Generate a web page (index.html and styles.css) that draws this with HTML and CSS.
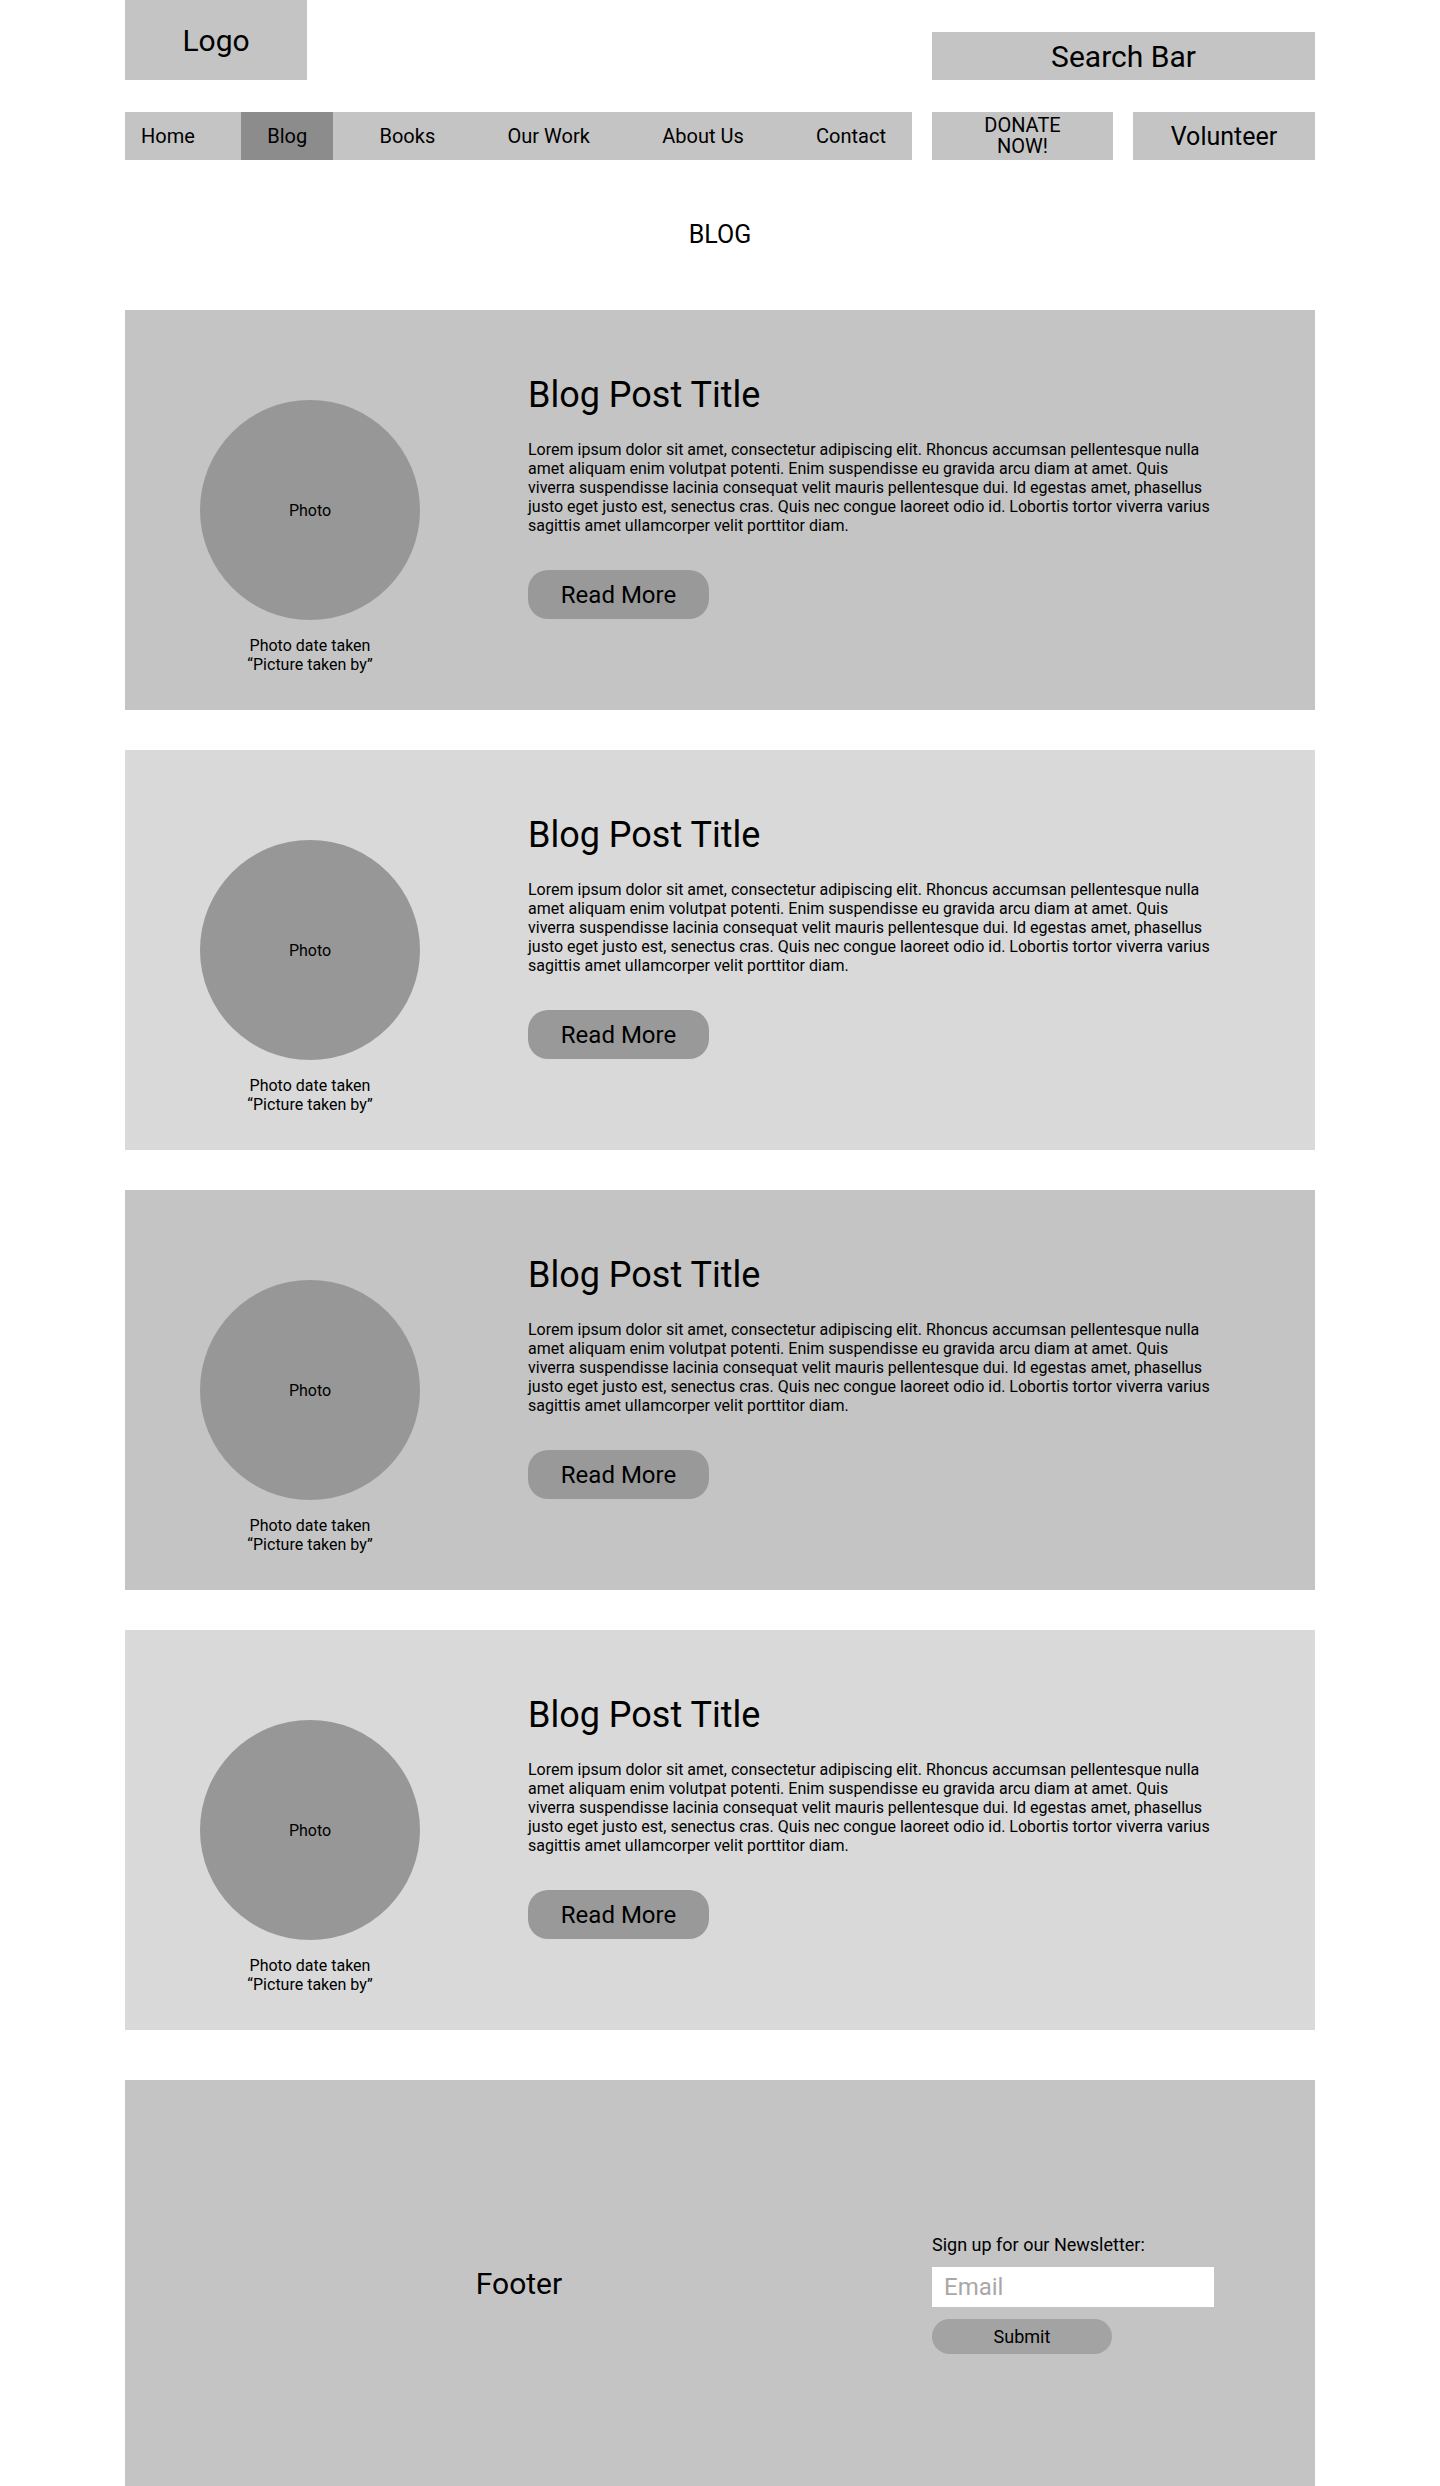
FILE: index.html
```html
<!DOCTYPE html>
<html lang="en">
<head>
<meta charset="utf-8">
<title>Blog</title>
<link rel="stylesheet" href="styles.css">
</head>
<body>
<div class="page">
  <header class="site-header">
    <div class="top-row">
      <div class="logo">Logo</div>
      <div class="search">Search Bar</div>
    </div>
    <div class="nav-row">
      <nav class="nav">
        <a class="nav-item">Home</a>
        <a class="nav-item nav-item--active">Blog</a>
        <a class="nav-item">Books</a>
        <a class="nav-item">Our Work</a>
        <a class="nav-item">About Us</a>
        <a class="nav-item">Contact</a>
      </nav>
      <a class="donate">DONATE<br>NOW!</a>
      <a class="volunteer">Volunteer</a>
    </div>
  </header>

  <main>
    <h1 class="page-title">BLOG</h1>
    <div class="posts">
      <article class="post post--dark">
        <div class="post-media">
          <div class="photo">Photo</div>
          <div class="caption">Photo date taken<br>“Picture taken by”</div>
        </div>
        <div class="post-body">
          <h2 class="post-title">Blog Post Title</h2>
          <p class="post-text">Lorem ipsum dolor sit amet, consectetur adipiscing elit. Rhoncus accumsan pellentesque nulla amet aliquam enim volutpat potenti. Enim suspendisse eu gravida arcu diam at amet. Quis viverra suspendisse lacinia consequat velit mauris pellentesque dui. Id egestas amet, phasellus justo eget justo est, senectus cras. Quis nec congue laoreet odio id. Lobortis tortor viverra varius sagittis amet ullamcorper velit porttitor diam.</p>
          <a class="read-more">Read More</a>
        </div>
      </article>
      <article class="post post--light">
        <div class="post-media">
          <div class="photo">Photo</div>
          <div class="caption">Photo date taken<br>“Picture taken by”</div>
        </div>
        <div class="post-body">
          <h2 class="post-title">Blog Post Title</h2>
          <p class="post-text">Lorem ipsum dolor sit amet, consectetur adipiscing elit. Rhoncus accumsan pellentesque nulla amet aliquam enim volutpat potenti. Enim suspendisse eu gravida arcu diam at amet. Quis viverra suspendisse lacinia consequat velit mauris pellentesque dui. Id egestas amet, phasellus justo eget justo est, senectus cras. Quis nec congue laoreet odio id. Lobortis tortor viverra varius sagittis amet ullamcorper velit porttitor diam.</p>
          <a class="read-more">Read More</a>
        </div>
      </article>
      <article class="post post--dark">
        <div class="post-media">
          <div class="photo">Photo</div>
          <div class="caption">Photo date taken<br>“Picture taken by”</div>
        </div>
        <div class="post-body">
          <h2 class="post-title">Blog Post Title</h2>
          <p class="post-text">Lorem ipsum dolor sit amet, consectetur adipiscing elit. Rhoncus accumsan pellentesque nulla amet aliquam enim volutpat potenti. Enim suspendisse eu gravida arcu diam at amet. Quis viverra suspendisse lacinia consequat velit mauris pellentesque dui. Id egestas amet, phasellus justo eget justo est, senectus cras. Quis nec congue laoreet odio id. Lobortis tortor viverra varius sagittis amet ullamcorper velit porttitor diam.</p>
          <a class="read-more">Read More</a>
        </div>
      </article>
      <article class="post post--light">
        <div class="post-media">
          <div class="photo">Photo</div>
          <div class="caption">Photo date taken<br>“Picture taken by”</div>
        </div>
        <div class="post-body">
          <h2 class="post-title">Blog Post Title</h2>
          <p class="post-text">Lorem ipsum dolor sit amet, consectetur adipiscing elit. Rhoncus accumsan pellentesque nulla amet aliquam enim volutpat potenti. Enim suspendisse eu gravida arcu diam at amet. Quis viverra suspendisse lacinia consequat velit mauris pellentesque dui. Id egestas amet, phasellus justo eget justo est, senectus cras. Quis nec congue laoreet odio id. Lobortis tortor viverra varius sagittis amet ullamcorper velit porttitor diam.</p>
          <a class="read-more">Read More</a>
        </div>
      </article>
    </div>
  </main>

  <footer class="site-footer">
    <div class="footer-brand">Footer</div>
    <form class="newsletter">
      <label class="newsletter-label" for="email">Sign up for our Newsletter:</label>
      <input class="newsletter-input" id="email" type="text" placeholder="Email">
      <button class="newsletter-submit" type="button">Submit</button>
    </form>
  </footer>
</div>
</body>
</html>
```

FILE: styles.css
```css
html, body {
  margin: 0;
  padding: 0;
  background: #ffffff;
}

body {
  font-family: Roboto, "Liberation Sans", sans-serif;
  color: #000000;
}

.page {
  width: 1190px;
  margin: 0 auto;
}

a {
  color: inherit;
  text-decoration: none;
}

/* Header */
.top-row {
  display: flex;
  justify-content: space-between;
  align-items: flex-end;
  height: 80px;
}

.logo {
  width: 182px;
  height: 80px;
  background: #c4c4c4;
  display: flex;
  align-items: center;
  justify-content: center;
  font-size: 30px;
}

.search {
  width: 383px;
  height: 48px;
  background: #c4c4c4;
  display: flex;
  align-items: center;
  justify-content: center;
  font-size: 30px;
}

.nav-row {
  display: flex;
  gap: 20px;
  height: 48px;
  margin-top: 32px;
}

.nav {
  width: 787px;
  display: flex;
  justify-content: space-between;
  background: #c4c4c4;
}

.nav-item {
  display: flex;
  align-items: center;
  padding: 0 26px;
  font-size: 20px;
}

.nav-item:first-child {
  padding-left: 16px;
}

.nav-item--active {
  background: #8c8c8c;
}

.donate {
  width: 181px;
  background: #c4c4c4;
  display: flex;
  align-items: center;
  justify-content: center;
  text-align: center;
  font-size: 20px;
  line-height: 21px;
}

.volunteer {
  flex: 1;
  background: #c4c4c4;
  display: flex;
  align-items: center;
  justify-content: center;
  font-size: 25px;
}

/* Title */
.page-title {
  margin: 60px 0;
  text-align: center;
  font-size: 25px;
  line-height: 30px;
  font-weight: 400;
}

/* Posts */
.posts {
  display: flex;
  flex-direction: column;
  gap: 40px;
}

.post {
  display: flex;
  height: 400px;
  padding-left: 75px;
  box-sizing: border-box;
}

.post--dark {
  background: #c4c4c4;
}

.post--light {
  background: #d9d9d9;
}

.post-media {
  width: 220px;
  padding-top: 90px;
  display: flex;
  flex-direction: column;
  align-items: center;
}

.photo {
  width: 220px;
  height: 220px;
  border-radius: 50%;
  background: #979797;
  display: flex;
  align-items: center;
  justify-content: center;
  font-size: 16px;
}

.caption {
  margin-top: 16px;
  font-size: 16px;
  line-height: 19px;
  text-align: center;
}

.post-body {
  width: 688px;
  margin-left: 108px;
  padding-top: 64px;
}

.post-title {
  margin: 0;
  font-size: 36px;
  line-height: 42px;
  font-weight: 400;
}

.post-text {
  margin: 24px 0 0;
  font-size: 16px;
  line-height: 19px;
}

.read-more {
  margin-top: 35px;
  width: 181px;
  height: 49px;
  border-radius: 20px;
  background: #999999;
  display: flex;
  align-items: center;
  justify-content: center;
  font-size: 24px;
}

/* Footer */
.site-footer {
  margin-top: 50px;
  height: 406px;
  background: #c4c4c4;
  display: flex;
  align-items: center;
}

.footer-brand {
  width: 788px;
  text-align: center;
  font-size: 30px;
}

.newsletter {
  margin-left: 19px;
  margin-top: 22px;
  display: flex;
  flex-direction: column;
  align-items: flex-start;
}

.newsletter-label {
  font-size: 18px;
  line-height: 21px;
}

.newsletter-input {
  margin-top: 12px;
  width: 282px;
  height: 40px;
  box-sizing: border-box;
  border: none;
  background: #ffffff;
  padding: 0 12px;
  font-family: Roboto, "Liberation Sans", sans-serif;
  font-size: 24px;
  color: #000000;
  outline: none;
}

.newsletter-input::placeholder {
  color: #a8a8a8;
}

.newsletter-submit {
  margin-top: 12px;
  width: 180px;
  height: 35px;
  border: none;
  border-radius: 18px;
  background: #a3a3a3;
  font-family: Roboto, "Liberation Sans", sans-serif;
  font-size: 18px;
  color: #000000;
  padding: 0;
}
```
